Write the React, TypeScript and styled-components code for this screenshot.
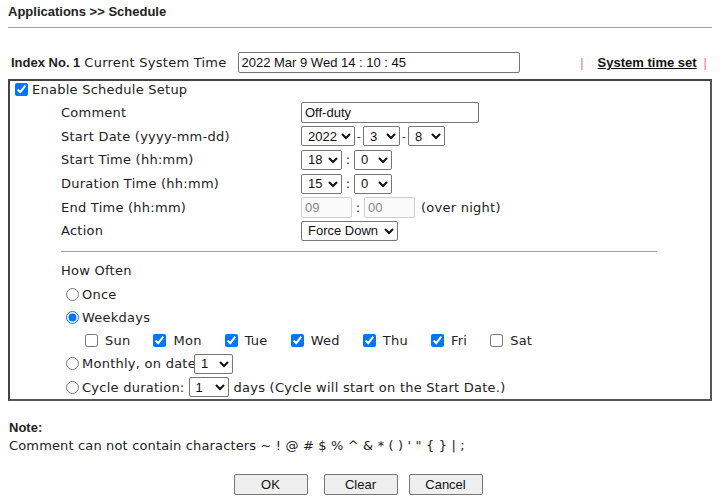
import styled, { createGlobalStyle } from "styled-components";

const GlobalStyle = createGlobalStyle`
  body {
    margin: 0;
    background: #fff;
    color: #222;
    font-family: "DejaVu Sans", Verdana, sans-serif;
    font-size: 13px;
    letter-spacing: 0.25px;
  }
`;

const days = [
  { name: "Sun", on: false },
  { name: "Mon", on: true },
  { name: "Tue", on: true },
  { name: "Wed", on: true },
  { name: "Thu", on: true },
  { name: "Fri", on: true },
  { name: "Sat", on: false },
];

const App = () => {
  return (
    <Page>
      <GlobalStyle />
      <Title>Applications &gt;&gt; Schedule</Title>

      <IndexRow>
        <IndexLeft>
          <Strong>Index No. 1</Strong>
          <span>Current System Time</span>
          <TextInput $w={282} defaultValue="2022 Mar 9 Wed 14 : 10 : 45" />
        </IndexLeft>
        <IndexRight>
          <Pipe>|</Pipe>
          <TimeLink>System time set</TimeLink>
          <Pipe>|</Pipe>
        </IndexRight>
      </IndexRow>

      <Box>
        <EnableRow>
          <Check type="checkbox" defaultChecked />
          Enable Schedule Setup
        </EnableRow>

        <FormGrid>
          <Label>Comment</Label>
          <Field>
            <TextInput $w={178} defaultValue="Off-duty" />
          </Field>

          <Label>Start Date (yyyy-mm-dd)</Label>
          <Field>
            <Select $w={54} defaultValue="2022">
              <option>2022</option>
            </Select>
            <Dash>-</Dash>
            <Select $w={37} defaultValue="3">
              <option>3</option>
            </Select>
            <Dash>-</Dash>
            <Select $w={37} defaultValue="8">
              <option>8</option>
            </Select>
          </Field>

          <Label>Start Time (hh:mm)</Label>
          <Field>
            <Select $w={41} defaultValue="18">
              <option>18</option>
            </Select>
            <Colon>:</Colon>
            <Select $w={38} defaultValue="0">
              <option>0</option>
            </Select>
          </Field>

          <Label>Duration Time (hh:mm)</Label>
          <Field>
            <Select $w={41} defaultValue="15">
              <option>15</option>
            </Select>
            <Colon>:</Colon>
            <Select $w={38} defaultValue="0">
              <option>0</option>
            </Select>
          </Field>

          <Label>End Time (hh:mm)</Label>
          <Field>
            <TextInput $w={51} defaultValue="09" disabled />
            <Colon>:</Colon>
            <TextInput $w={51} defaultValue="00" disabled />
            <Hint>(over night)</Hint>
          </Field>

          <Label>Action</Label>
          <Field>
            <Select $w={97} defaultValue="Force Down">
              <option>Force Down</option>
            </Select>
          </Field>
        </FormGrid>

        <Divider />

        <OftenBlock>
          <OftenRow>How Often</OftenRow>
          <OftenRow>
            <Radio type="radio" name="often" />
            Once
          </OftenRow>
          <OftenRow>
            <Radio type="radio" name="often" defaultChecked />
            Weekdays
          </OftenRow>
          <DayRow>
            {days.map((d) => (
              <DayItem key={d.name}>
                <DayCheck type="checkbox" defaultChecked={d.on} />
                {d.name}
              </DayItem>
            ))}
          </DayRow>
          <OftenRow>
            <Radio type="radio" name="often" />
            Monthly, on date
            <Select $w={39} $ml={-2} defaultValue="1">
              <option>1</option>
            </Select>
          </OftenRow>
          <OftenRow>
            <Radio type="radio" name="often" />
            Cycle duration:
            <Select $w={40} $ml={4} defaultValue="1">
              <option>1</option>
            </Select>
            <Hint $ml={5}>days (Cycle will start on the Start Date.)</Hint>
          </OftenRow>
        </OftenBlock>
      </Box>

      <Note>
        <NoteTitle>Note:</NoteTitle>
        <NoteText>
          Comment can not contain characters ~ ! @ # $ % ^ &amp; * ( ) ' " {"{"} {"}"} | ;
        </NoteText>
      </Note>

      <Buttons>
        <Btn $mr={16}>OK</Btn>
        <Btn $mr={11}>Clear</Btn>
        <Btn>Cancel</Btn>
      </Buttons>
    </Page>
  );
};
export default App;

const Page = styled.div`
  width: 704px;
  padding: 0 8px;
`;

const Title = styled.div`
  font-family: "Liberation Sans", Arial, sans-serif;
  font-weight: bold;
  font-size: 13px;
  letter-spacing: 0;
  line-height: 24px;
  padding-bottom: 3px;
  border-bottom: 1px solid #a0a0a0;
  color: #222;
`;

const IndexRow = styled.div`
  display: flex;
  align-items: center;
  justify-content: space-between;
  height: 21px;
  margin-top: 24px;
  padding: 0 5px 0 3px;
`;

const IndexLeft = styled.div`
  display: flex;
  align-items: center;
  gap: 4px;

  & > input {
    margin-left: 7px;
  }
`;

const Strong = styled.span`
  font-family: "Liberation Sans", Arial, sans-serif;
  font-weight: bold;
  font-size: 13px;
  letter-spacing: 0;
`;

const IndexRight = styled.div`
  display: flex;
  align-items: center;
  gap: 9px;
  font-family: "Liberation Sans", Arial, sans-serif;
  font-size: 13px;
  letter-spacing: 0;
`;

const Pipe = styled.span`
  color: #f47a7a;
`;

const TimeLink = styled.a`
  font-weight: bold;
  color: #111;
  text-decoration: underline;
  margin: 0 -2px 0 5px;
`;

const Box = styled.div`
  margin-top: 6px;
  border: 2px solid #555;
  border-color: #444 #555 #555 #444;
`;

const EnableRow = styled.label`
  display: flex;
  align-items: center;
  height: 16px;
  padding-left: 5px;
  gap: 4px;
`;

const Check = styled.input`
  width: 13px;
  height: 13px;
  margin: 0;
  accent-color: #0075ff;
`;

const FormGrid = styled.div`
  display: grid;
  grid-template-columns: 240px 1fr;
  grid-auto-rows: 23.6px;
  margin-top: 4px;
  padding-left: 51px;
`;

const Label = styled.div`
  display: flex;
  align-items: center;
`;

const Field = styled.div`
  display: flex;
  align-items: center;
`;

const TextInput = styled.input<{ $w: number }>`
  box-sizing: border-box;
  width: ${(p) => p.$w}px;
  height: 21px;
  padding: 0 3px;
  border: 1px solid #767676;
  border-radius: 2px;
  font-family: "Liberation Sans", Arial, sans-serif;
  font-size: 13px;
  letter-spacing: 0;
  color: #111;
  background: #fff;

  &:disabled {
    border-color: #cfcfcf;
    background: #fafafa;
    color: #8a8a8a;
  }
`;

const Select = styled.select<{ $w: number; $ml?: number }>`
  box-sizing: border-box;
  width: ${(p) => p.$w}px;
  height: 20px;
  margin-left: ${(p) => p.$ml ?? 0}px;
  padding: 0 0 0 2px;
  border: 1px solid #767676;
  border-radius: 2px;
  background: #fff;
  color: #111;
  font-family: "Liberation Sans", Arial, sans-serif;
  font-size: 13px;
  letter-spacing: 0;
`;

const Dash = styled.span`
  width: 8px;
  text-align: center;
  font-family: "Liberation Sans", Arial, sans-serif;
  font-size: 11px;
`;

const Colon = styled.span`
  width: 12px;
  text-align: center;
`;

const Hint = styled.span<{ $ml?: number }>`
  margin-left: ${(p) => p.$ml ?? 6}px;
`;

const Divider = styled.div`
  width: 596px;
  margin: 8px 0 0 51px;
  border-top: 1px solid #a0a0a0;
`;

const OftenBlock = styled.div`
  display: grid;
  grid-auto-rows: 23.3px;
  margin-top: 7.5px;
  padding-left: 51px;
`;

const OftenRow = styled.label`
  display: flex;
  align-items: center;
`;

const Radio = styled.input`
  width: 13px;
  height: 13px;
  margin: 0 3px 0 5px;
  accent-color: #0075ff;
`;

const DayRow = styled.div`
  display: flex;
  align-items: center;
  gap: 23px;
  padding-left: 24px;
`;

const DayItem = styled.label`
  display: flex;
  align-items: center;
`;

const DayCheck = styled.input`
  width: 13px;
  height: 13px;
  margin: 0 7px 0 0;
  accent-color: #0075ff;
`;

const Note = styled.div`
  margin-top: 18px;
  padding-left: 1px;
  line-height: 18px;
`;

const NoteTitle = styled.div`
  font-family: "Liberation Sans", Arial, sans-serif;
  font-weight: bold;
  font-size: 13px;
  letter-spacing: 0;
`;

const NoteText = styled.div`
  letter-spacing: 0.15px;
`;

const Buttons = styled.div`
  display: flex;
  justify-content: center;
  padding-right: 4px;
`;

const Btn = styled.button<{ $mr?: number }>`
  box-sizing: border-box;
  width: 74px;
  height: 21px;
  margin-top: 19.5px;
  margin-right: ${(p) => p.$mr ?? 0}px;
  border: 1px solid #767676;
  border-radius: 2px;
  background: #efefef;
  color: #111;
  font-family: "Liberation Sans", Arial, sans-serif;
  font-size: 13px;
  letter-spacing: 0;
`;
